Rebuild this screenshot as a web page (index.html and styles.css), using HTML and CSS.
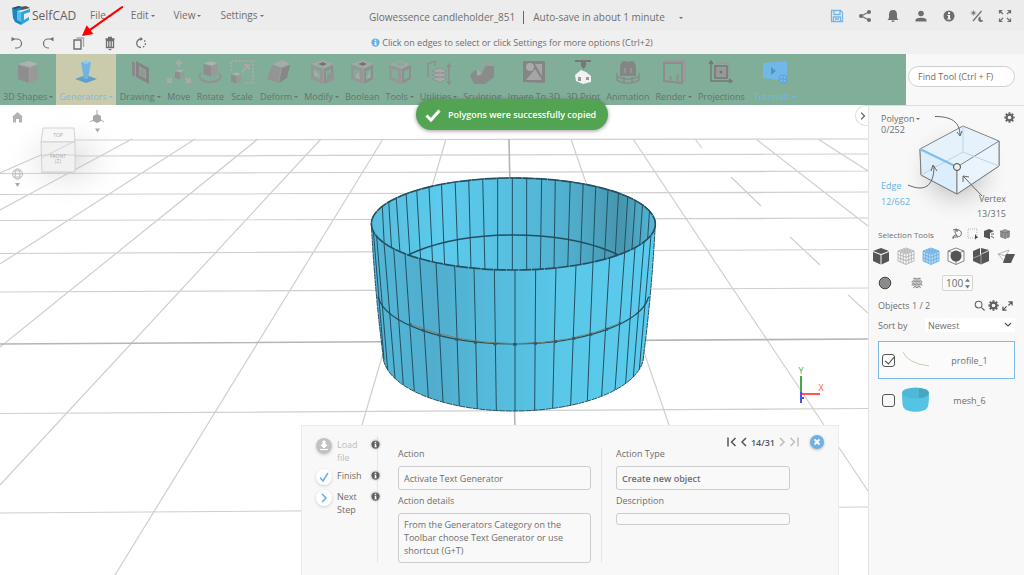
FILE: index.html
```html
<!DOCTYPE html>
<html lang="en">
<head>
<meta charset="utf-8">
<title>SelfCAD</title>
<link rel="stylesheet" href="styles.css">
</head>
<body>
<svg class="defs" aria-hidden="true">
  <symbol id="info" viewBox="0 0 12 12"><circle cx="6" cy="6" r="5.5" fill="currentColor"/><path d="M5 2.3h2v1.6H5zM4.4 5H7v3.6h.8v1H4.3v-1h.9V6h-.8z" fill="#fff"/></symbol>
  <symbol id="gear" viewBox="0 0 12 12"><circle cx="6" cy="6" r="3.1" fill="none" stroke="currentColor" stroke-width="2.2"/><path d="M6 .4v2M6 9.6v2M.4 6h2M9.6 6h2M2 2l1.5 1.5M8.5 8.5 10 10M10 2 8.500 3.500M3.500 8.500 2 10" stroke="currentColor" stroke-width="2.200"/></symbol>
  <symbol id="cube" viewBox="0 0 24 24"><path d="M2 4 13 1l9 3-8 3z" fill="#b0b0b0"/><path d="M2 5l11 3v15L2 19z" fill="#8e8e8e"/><path d="M14 8l8-3v14l-8 4z" fill="#999"/></symbol>
  <symbol id="frame" viewBox="0 0 24 24"><path d="M2 4 13 0l9 4-8 4z" fill="#a8a8a8"/><path d="M8 4l5-2 4 2-4 2z" fill="#747474"/><path fill-rule="evenodd" d="M1 5l12 4v15L1 19zM4 9v8l6 3v-9z" fill="#969696"/><path fill-rule="evenodd" d="M14 9l9-4v14l-9 5zM16 11v9l5-3V9z" fill="#8e8e8e"/></symbol>
  <symbol id="mesh" viewBox="0 0 18 18"><path d="M1 4 9 1l8 3v10l-8 3.500L1 14zM1 4l8 3 8-3M9 7v10M3.700 5v10M6.300 6v10M11.700 6v10M14.300 5v10M1 7.300l8 3 8-3M1 10.700l8 3 8-3M3.700 3l8 3M6.300 2l8 3M14.300 3l-8 3M11.700 2l-8 3" fill="none" stroke="currentColor" stroke-width=".8"/></symbol>
  <symbol id="expand" viewBox="0 0 14 14"><path d="M1.500 4.500v-3h3M9.500 1.500h3v3M12.500 9.500v3h-3M4.500 12.500h-3v-3M1.500 1.500 5 5M12.500 1.500 9 5M12.500 12.500 9 9M1.500 12.500 5 9" fill="none" stroke="currentColor" stroke-width="1.200"/></symbol>
</svg>

<header class="topbar">
  <div class="brand">
    <svg class="brand-mark" viewBox="0 0 20 21"><path d="M1 3 8 1l3 1v3l-5 1v8l4 2v4l-6-3-2-4z" fill="#1688bd"/><path d="M1 3l7-2 2 1-6 2z" fill="#444"/><path d="M6 6l4 1v10l-4-2z" fill="#56bfec"/><path d="M10 7l9-3v3l-6 2v6l5-3v3l-8 5z" fill="#2ba6df"/><path d="M9 2l6-1 4 2-8 2z" fill="#555"/></svg>
    <span class="brand-name">SelfCAD</span>
  </div>
  <nav class="menu">
    <button class="menu-item">File<i class="caret"></i></button>
    <button class="menu-item">Edit<i class="caret"></i></button>
    <button class="menu-item">View<i class="caret"></i></button>
    <button class="menu-item">Settings<i class="caret"></i></button>
  </nav>
  <div class="project">
    <span class="project-name">Glowessence candleholder_851</span>
    <button class="autosave">Auto-save in about 1 minute<i class="caret caret-far"></i></button>
  </div>
  <div class="actions">
    <button class="icon-btn blue" aria-label="Save"><svg viewBox="0 0 14 14"><path d="M1.500 1.500h9l2 2v9h-11zM4 1.500v4h6v-4M3.500 12.500V8h7v4.500M5 10h4" fill="none" stroke="currentColor" stroke-width="1.300"/></svg></button>
    <button class="icon-btn" aria-label="Share"><svg viewBox="0 0 14 14"><path d="M11 3 3 7l8 4" fill="none" stroke="currentColor" stroke-width="1.200"/><g fill="currentColor"><circle cx="11" cy="3" r="2"/><circle cx="3" cy="7" r="2"/><circle cx="11" cy="11" r="2"/></g></svg></button>
    <button class="icon-btn" aria-label="Notifications"><svg viewBox="0 0 14 14"><path d="M7 1c3 0 4 2 4 4.500V9l1.500 2h-11L3 9V5.500C3 3 4 1 7 1zM5.500 11.500h3a1.500 1.500 0 0 1-3 0z" fill="currentColor"/></svg></button>
    <button class="icon-btn" aria-label="Account"><svg viewBox="0 0 14 14"><circle cx="7" cy="4.500" r="2.800" fill="currentColor"/><path d="M1.500 12.500V11c0-3 11-3 11 0v1.500z" fill="currentColor"/></svg></button>
    <button class="icon-btn" aria-label="Information"><svg viewBox="-1 -1 14 14"><use href="#info" width="12" height="12"/></svg></button>
    <button class="icon-btn" aria-label="Theme"><svg viewBox="0 0 14 14"><path d="M11.500 2 3 12" stroke="currentColor" stroke-width="1.200"/><circle cx="3.500" cy="4" r="1.300" fill="currentColor"/><path d="M3.500 1v6M.5 4h6M1.500 2l4 4M5.500 2l-4 4" stroke="currentColor" stroke-width=".5"/><path d="M10.500 7.500a2.800 2.800 0 1 0 3 4c-2 .5-3.600-1.500-3-4z" fill="currentColor"/></svg></button>
    <button class="icon-btn" aria-label="Full screen"><svg viewBox="0 0 14 14"><use href="#expand"/></svg></button>
  </div>
</header>

<div class="editbar">
  <div class="edit-tools">
    <button class="icon-btn" aria-label="Undo"><svg viewBox="0 0 14 14"><path d="M3 3h4a4.500 4.500 0 0 1 0 9H5" fill="none" stroke="currentColor" stroke-width="1.200"/><path d="M1.500 1v4.500L5 3z" fill="currentColor"/></svg></button>
    <button class="icon-btn" aria-label="Redo"><svg viewBox="0 0 14 14"><path d="M11 3H7a4.500 4.500 0 0 0 0 9h1" fill="none" stroke="currentColor" stroke-width="1.200"/><path d="M12.500 1v4.500L9 3z" fill="currentColor"/></svg></button>
    <button class="icon-btn" aria-label="Copy"><svg viewBox="0 0 14 14"><path d="M2 4h7v9H2z" fill="none" stroke="currentColor" stroke-width="1.400"/><path d="M4.500 2h7v9" fill="none" stroke="#a3a9b1" stroke-width="1.300"/></svg></button>
    <button class="icon-btn" aria-label="Delete"><svg viewBox="0 0 14 14"><path d="M2.500 3h9M5 1.500h4M3.500 4.500h7v7h-7zM5.800 5v7M8.200 5v7" fill="none" stroke="currentColor" stroke-width="1.300"/><path d="M5 13h4l-2 1.500z" fill="currentColor"/></svg></button>
    <button class="icon-btn" aria-label="Reset"><svg viewBox="0 0 14 14"><path d="M7 11.500a4.200 4.200 0 1 1 0-8.500" fill="none" stroke="currentColor" stroke-width="1.300"/><path d="M6.500 1v4L9 3z" fill="currentColor"/><path d="M9 11a4.200 4.200 0 0 0 1-7" fill="none" stroke="currentColor" stroke-width="1.400" stroke-dasharray="1.500 1.500"/></svg></button>
  </div>
  <p class="hint"><svg class="hint-icon"><use href="#info"/></svg>Click on edges to select or click Settings for more options (Ctrl+2)</p>
</div>

<div class="ribbon">
  <div class="tools">
    <button class="tool"><svg viewBox="0 0 24 24"><use href="#cube"/></svg><span>3D Shapes<i class="caret"></i></span></button>
    <button class="tool tool-active"><svg viewBox="0 0 24 24"><path d="M12 15l11 4-11 4-11-4z" fill="#5d9fce"/><path d="M7 2h10l-3 17h-4z" fill="#70b4e3"/><path d="M7 2l5-2 5 2-5 2z" fill="#94c9ed"/></svg><span>Generators<i class="caret"></i></span></button>
    <button class="tool"><svg viewBox="0 0 24 24"><path d="M4 1v14l3 2V3z" fill="#8a8a8a"/><path fill-rule="evenodd" d="M8 1l13 7v16L8 17zM11 6v9l7 4v-9z" fill="#858585"/><path d="M12 8v7l5 3v-7z" fill="#8f9a93"/></svg><span>Drawing<i class="caret"></i></span></button>
    <button class="tool"><svg viewBox="0 0 24 24"><use href="#cube" x="7" y="9" width="11" height="11"/><path d="M12 1v6M9 4l3-3 3 3M5 18l-4 4M1 18v4h4M19 18l4 4M19 22h4v-4" fill="none" stroke="#aaa" stroke-width="2"/></svg><span>Move</span></button>
    <button class="tool"><svg viewBox="0 0 24 24"><use href="#cube" x="4" y="0" width="17" height="18"/><path d="M3 13c-5 5 2 9 9 9s14-4 9-9" fill="none" stroke="#939393" stroke-width="2"/></svg><span>Rotate</span></button>
    <button class="tool"><svg viewBox="0 0 24 24"><path d="M1 11V1h22v22H14" fill="none" stroke="#a8a8a8" stroke-width="2" stroke-dasharray="2 1.500"/><use href="#cube" x="0" y="12" width="12" height="12"/><path d="M12 12l7-7M14 5h5v5" fill="none" stroke="#a8a8a8" stroke-width="2"/></svg><span>Scale</span></button>
    <button class="tool"><svg viewBox="0 0 24 24"><path d="M6 4l10-4 7 4-9 3z" fill="#aaa"/><path d="M5 5l9 3-3 15L0 19z" fill="#949494"/><path d="M15 8l8-3-3 13-8 5z" fill="#878787"/></svg><span>Deform<i class="caret"></i></span></button>
    <button class="tool"><svg viewBox="0 0 24 24"><use href="#frame"/><path d="M4 9l6 8-6-1z" fill="#aaa"/><path d="M17 14l7-3v9l-7 3z" fill="#949494"/></svg><span>Modify<i class="caret"></i></span></button>
    <button class="tool"><svg viewBox="0 0 24 24"><use href="#frame"/><path d="M5 18l3-7 2 8zM17 19l2-8 2 6z" fill="#aaa"/></svg><span>Boolean</span></button>
    <button class="tool"><svg viewBox="0 0 24 24"><use href="#frame"/><path d="M5 3l8-3 6 3-6 3z" fill="#8cac9a"/></svg><span>Tools<i class="caret"></i></span></button>
    <button class="tool"><svg viewBox="0 0 24 24"><path d="M1 17V4l7-3v5M22 5v18M20 7l2-3 2 3M20 21l2 3 2-3" fill="none" stroke="#8c8c8c" stroke-width="1.300"/><path d="M5 11l8-3 7 3-7 3zM5 15l8-3 7 3-7 3zM5 19l8-3 7 3-7 3z" fill="#aaa" stroke="#858585" stroke-width=".5"/></svg><span>Utilities<i class="caret"></i></span></button>
    <button class="tool"><svg viewBox="0 0 24 24"><path d="M0 15l5-5 6 4 5-8h8v11l-9 7H4z" fill="#8b8b8b"/><path d="M18 0 9 10" stroke="#a0a0a0" stroke-width="1.500"/><path d="M7 9l5 5-5 2z" fill="#aaa"/></svg><span>Sculpting</span></button>
    <button class="tool"><svg viewBox="0 0 24 24"><path d="M1 1h22v22L1 22z" fill="#858585"/><circle cx="8" cy="7" r="4" fill="#aaa"/><path d="M4 20l9-11 7 11zM13 4h7v12z" fill="#a5a5a5"/></svg><span>Image To 3D</span></button>
    <button class="tool"><svg viewBox="0 0 24 24"><path d="M4 0h16v2H4zM10 2h5v4l-2.500 3L10 6z" fill="#777"/><path d="M4 15l6-5 5 2 5 4v6l-8 2-7-3z" fill="#f1f1f1"/><path d="M7 17h3v4H7zM15 17h3v3h-3z" fill="#999"/></svg><span>3D Print</span></button>
    <button class="tool"><svg viewBox="0 0 24 24"><path d="M4 8c0-8 5-8 8-6 3-2 8-2 8 6v8H4z" fill="#858585"/><path d="M9 13V8M15 13V8" stroke="#999" stroke-width="1.500"/><path d="M1 13v7c5 4 17 4 22 0v-7M1 16c5 4 17 4 22 0M8 17v6M16 17v6" fill="none" stroke="#8a8a8a" stroke-width="1.600"/></svg><span>Animation</span></button>
    <button class="tool"><svg viewBox="0 0 24 24"><path d="M3 3V1h20v20l-3 1" fill="none" stroke="#999" stroke-width="2"/><path d="M2 3h18v20l-18-2z" fill="none" stroke="#8d8d8d" stroke-width="2"/><path d="M7 21v-5h3v5zM14 22v-8h3v8z" fill="#8a9a91"/></svg><span>Render<i class="caret"></i></span></button>
    <button class="tool"><svg viewBox="0 0 24 24"><path d="M2 1v20h21M0 4l2-3 2 3M20 19l3 2-3 2" fill="none" stroke="#777" stroke-width="1.400"/><path d="M6 6l3-3h11v11l-2 4" fill="none" stroke="#999" stroke-width="1.500"/><path d="M6 6h12v12H6z" fill="#999" stroke="#777" stroke-width="1.500"/><circle cx="12" cy="12" r="1.500" fill="#5f7f6f"/></svg><span>Projections</span></button>
    <button class="tool tool-link"><svg viewBox="0 0 24 24"><path d="M0 3l24-2v20L0 18z" fill="#70b8ea"/><path d="M8 7l5 4-5 4z" fill="#5a92ae"/><circle cx="20" cy="19" r="4" fill="#78bcea" stroke="#5d9fce"/><path d="M20 16v6M17 19h6" stroke="#5d9fce"/></svg><span>Tutorials<i class="caret"></i></span></button>
  </div>
  <input class="find" type="text" aria-label="Find tool" placeholder="Find Tool (Ctrl + F)">
</div>

<main class="workspace">
  <section class="viewport" aria-label="3D view">
    <svg class="scene" viewBox="0 105 868 470" preserveAspectRatio="xMinYMin slice">
      <defs>
        <linearGradient id="outer"><stop offset="0" stop-color="#53b7d8"/><stop offset=".22" stop-color="#50adcd"/><stop offset=".4" stop-color="#54b9da"/><stop offset=".68" stop-color="#59c8e9"/><stop offset="1" stop-color="#5bcbed"/></linearGradient>
        <linearGradient id="inner"><stop offset="0" stop-color="#56bddd"/><stop offset=".25" stop-color="#5ccbed"/><stop offset=".45" stop-color="#58c2e3"/><stop offset=".7" stop-color="#50aecd"/><stop offset=".88" stop-color="#4795ae"/><stop offset="1" stop-color="#56b9d8"/></linearGradient>
        <radialGradient id="haze"><stop offset="0" stop-color="#999" stop-opacity=".55"/><stop offset="1" stop-color="#fff" stop-opacity="0"/></radialGradient>
        <clipPath id="mouth"><ellipse cx="490" cy="192" rx="426" ry="138"/></clipPath>
      </defs>
      <path fill="none" stroke="#cfcfcf" stroke-width="1.200" d="M75 140 868 139M75 156 868 154M0 173.500 868 171M0 194.500 868 192M0 220.500 868 218M0 253.500 868 249.500M0 292 868 288M0 413.500 868 408.500M0 513 868 507M446 139 362 425M383 139 115 575M321 139 0 485M258 139 0 347M195 139 0 264M132 139 0 210M75 140 0 173M571 139 669 425M633 139 868 491M695 139 702 148M731 177 761 206M790 237 820 265M848 295 868 313M756 139 868 226M818 139 868 171"/>
      <path fill="none" stroke="#b5b5b5" stroke-width="1.600" d="M0 344 868 339M509 139 515 430"/>
      <svg x="350" y="160" width="320" height="260" viewBox="0 0 960 780">
        <path d="M64 192A426 138 0 0 1 916 192Q905 400 881 585A391 168 0 0 1 99 585Q75 400 64 192z" fill="url(#outer)" stroke="#244f61" stroke-width="3" stroke-dasharray="18 2"/>
        <ellipse cx="490" cy="192" rx="426" ry="138" fill="url(#inner)"/>
        <g clip-path="url(#mouth)" fill="none" stroke="#244f61" stroke-width="3">
          <path d="M95 100 103 260M114 90 125 270M137 90 150 280M167 80 180 290M199 70 212 300M236 60 248 310M274 60 284 320M315 50 325 330M356 50 363 330M398 50 405 335M443 50 443 335M487 50 487 335M530 50 530 335M575 50 571 335M616 50 612 330M661 50 653 330M700 60 691 320M738 60 728 320M775 70 763 310M807 70 795 300M835 80 822 290M858 90 845 280M880 100 868 270M900 130 892 250"/>
          <ellipse cx="490" cy="389" rx="408" ry="164" stroke-width="5"/>
        </g>
        <path fill="none" stroke="#244f61" stroke-width="3" d="M70 212 102 600M80 230 113 630M102 249 135 655M131 266 160 675M165 281 193 694M209 296 235 712M258 308 279 726M314 318 328 738M372 325 382 746M433 329 439 752M495 330 495 753M557 328 554 751M618 324 608 745M678 316 662 736M729 306 712 723M779 293 755 708M824 278 795 690M855 263 827 670M882 246 850 650M903 226 868 628"/>
        <ellipse cx="490" cy="192" rx="426" ry="138" fill="none" stroke="#244f61" stroke-width="5" stroke-dasharray="36 2"/>
        <path d="M84 410A408 157 0 0 0 896 410" fill="none" stroke="#244f61" stroke-width="4"/>
        <path d="M180 492Q320 549 490 551T810 490" fill="none" stroke="#7d8168" stroke-width="3"/>
        <path d="M178 494h6M216 511h8M263 525h9M316 538h9M372 547h9M430 552h10M489 553h11M551 550h10M612 545h9M667 535h9M718 523h9M766 508h8M806 491h6" stroke="#315970" stroke-width="8"/>
      </svg>
      <ellipse cx="66" cy="160" rx="66" ry="50" fill="url(#haze)" opacity=".6"/>
      <g stroke="#c4c4c4" stroke-width=".7"><path d="M43 128h31l1 14H41z" fill="#f7f7f7"/><path d="M41 142h34v30H42z" fill="#f1f1f1"/></g>
      <path d="M41 158l34-17M41 155h34M41 173h34" stroke="#ccc" stroke-width=".8"/>
      <g class="cube-text"><text x="58" y="137">TOP</text><text x="58" y="158">FRONT</text><text x="58" y="163">(Z)</text></g>
      <path d="M12 117l5.500-5 5.500 5h-1v5.500h-3v-3.500h-3v3.500h-3V117z" fill="#b2b2b2"/>
      <path d="M93 116l4-2 4 2v5l-4 2-4-2z" fill="#a8a8a8"/><path d="M97 110v4M93 120l-3 2M101 120l3 2" stroke="#aaa"/>
      <path d="M95 128.500h5l-2.500 4zM15 183h5l-2.500 4z" fill="#aaa"/>
      <g fill="none" stroke="#c0c0c0"><circle cx="17.500" cy="174" r="5"/><ellipse cx="17.500" cy="174" rx="2.300" ry="5"/><path d="M12.500 174h10M13.500 171h8M13.500 177h8"/></g>
      <path d="M801 376v18" stroke="#48a648" stroke-width="2"/><path d="M801 394h19" stroke="#f55" stroke-width="2"/><path d="M801 392v11M802 398h2" stroke="#5050ee" stroke-width="2"/>
      <g class="axis"><text x="801" y="374" fill="#55a955">Y</text><text x="821" y="391" fill="#ff6060">X</text></g>
    </svg>
    <button class="collapse" aria-label="Collapse panel"><svg viewBox="0 0 8 12"><path d="M1.500 1.500 6 6l-4.500 4.500" fill="none" stroke="#555" stroke-width="1.500"/></svg></button>

    <section class="tutorial" aria-label="Tutorial step">
      <div class="steps">
        <button class="step step-off"><svg class="step-icon" viewBox="0 0 16 16"><circle cx="8" cy="8" r="8" fill="#c2c2c2"/><path d="M7 3h2v4h2l-3 3-3-3h2zM4 11.500h8" fill="#fff" stroke="#fff"/></svg><span>Load file</span><svg class="step-info"><use href="#info"/></svg></button>
        <button class="step"><svg class="step-icon ring" viewBox="0 0 16 16"><path d="M4 8.500 7 12l5-8" fill="none" stroke="#61aee4" stroke-width="1.500"/></svg><span>Finish</span><svg class="step-info"><use href="#info"/></svg></button>
        <button class="step"><svg class="step-icon ring" viewBox="0 0 16 16"><path d="M6 4l4 4-4 4" fill="none" stroke="#61aee4" stroke-width="1.500"/></svg><span>Next Step</span><svg class="step-info"><use href="#info"/></svg></button>
      </div>
      <div class="fields fields-action">
        <label for="action">Action</label>
        <input id="action" type="text" value="Activate Text Generator">
        <label for="details">Action details</label>
        <textarea id="details">From the Generators Category on the Toolbar choose Text Generator or use shortcut (G+T)</textarea>
      </div>
      <div class="side">
        <div class="pager">
          <button class="page-btn" aria-label="First"><svg viewBox="0 0 10 10"><path d="M1 .5v9M8.500 1 4.500 5l4 4" fill="none" stroke="currentColor" stroke-width="1.500"/></svg></button>
          <button class="page-btn" aria-label="Previous"><svg viewBox="0 0 10 10"><path d="M7 1 3 5l4 4" fill="none" stroke="currentColor" stroke-width="1.500"/></svg></button>
          <span>14/31</span>
          <button class="page-btn faint" aria-label="Next"><svg viewBox="0 0 10 10"><path d="M3 1l4 4-4 4" fill="none" stroke="currentColor" stroke-width="1.500"/></svg></button>
          <button class="page-btn faint" aria-label="Last"><svg viewBox="0 0 10 10"><path d="M9 .5v9M1.500 1l4 4-4 4" fill="none" stroke="currentColor" stroke-width="1.500"/></svg></button>
          <button class="close" aria-label="Close"><svg viewBox="0 0 14 14"><path d="M4.500 4.500l5 5M9.500 4.500l-5 5" stroke="#fff" stroke-width="1.800"/></svg></button>
        </div>
        <div class="fields fields-type">
          <label for="type">Action Type</label>
          <input id="type" class="strong" type="text" value="Create new object">
          <label for="description">Description</label>
          <input id="description" class="thin" type="text">
        </div>
      </div>
    </section>
  </section>

  <aside class="sidebar">
    <div class="picker">
      <svg class="picker-art" viewBox="1 0 156 120">
        <defs><radialGradient id="shade"><stop offset="0" stop-color="#777" stop-opacity=".75"/><stop offset="1" stop-color="#f8f8f8" stop-opacity="0"/></radialGradient></defs>
        <ellipse cx="88" cy="66" rx="54" ry="52" fill="url(#shade)"/>
        <g stroke="#757575" stroke-width=".9" stroke-linejoin="round"><path d="M52 44 95 21l36 15v25L89 89 53 70z" fill="#e5f2fc"/><path d="M52 44l37 18v27L53 70z" fill="#dcedfb"/><path d="M89 62l42-26v25L89 89z" fill="#e9f4fd"/></g>
        <path d="M95 21v26M53 70l42-23 36 14" fill="none" stroke="#bccfdd" stroke-width=".9"/>
        <path d="M52 44l37 18" stroke="#83bde9" stroke-width="2"/><circle cx="89" cy="62" r="3.500" fill="#eee" stroke="#444"/>
        <path d="M67 11.500c16 0 25 5 25 19M89 27l3 4 2-5M40 80c16 7 26 2 26-19M63 66l2-6 4 6M114 91 95 71M95 77v-6l6 1" fill="none" stroke="#666"/>
      </svg>
      <button class="mode mode-polygon">Polygon<i class="caret"></i><br>0/252</button>
      <button class="mode mode-edge">Edge<br>12/662</button>
      <button class="mode mode-vertex">Vertex<br>13/315</button>
      <button class="picker-settings" aria-label="Selection settings"><svg><use href="#gear"/></svg></button>
    </div>
    <div class="row selection-head">
      <h2>Selection Tools</h2>
      <div class="mini-tools">
        <button aria-label="Lasso"><svg viewBox="0 0 12 12"><path d="M3 10c-2-1 0-3 2-3s-1-1-1-3 1-2 3-2c3 0 4 3 3 5s-3 2-5 0M2 2l4-1v3M7 9H2v2" fill="none" stroke="#666"/></svg></button>
        <button aria-label="Rectangle"><svg viewBox="0 0 12 12"><path d="M1 1h9v9H1z" fill="none" stroke="#999" stroke-width=".7" stroke-dasharray="1 1"/><path d="M8 6l3 4H9l-1 2z" fill="#444"/></svg></button>
        <button aria-label="Grow"><svg viewBox="0 0 12 12"><path d="M1 3l5-2 5 2-4 2v6L1 9z" fill="#555"/><path d="M8 6h3M8 8l3 2" stroke="#666"/></svg></button>
        <button aria-label="Loop"><svg viewBox="0 0 12 12"><path d="M1 3l5-2 5 2v6l-5 2-5-2z" fill="#999"/><path d="M3 4v6M6 5v6M9 4v6M1 3l5 2 5-2" fill="none" stroke="#666" stroke-width=".6"/></svg></button>
      </div>
    </div>
    <div class="row view-tools">
      <button aria-label="Solid"><svg viewBox="0 0 18 18"><path d="M1 4l8-3 8 3-8 3zM1 5l7.500 3v9.500L1 14zM9.500 8 17 5v9l-7.500 3.500z" fill="#555"/></svg></button>
      <button class="grey" aria-label="Wireframe"><svg><use href="#mesh"/></svg></button>
      <button class="blue" aria-label="Solid and wireframe"><svg viewBox="0 0 18 18"><path d="M1 4 9 1l8 3v10l-8 3.500L1 14z" fill="#b4daf5"/><use href="#mesh" width="18" height="18"/></svg></button>
      <button aria-label="Isolate"><svg viewBox="0 0 18 18"><path d="M1 4l8-3 8 3v10l-8 3.500L1 14zM1 4l8 3 8-3M9 7v10" fill="none" stroke="#888"/><circle cx="9" cy="9" r="5.500" fill="#555"/></svg></button>
      <button aria-label="Section"><svg viewBox="0 0 18 18"><path d="M1 4l7-3v7l9-4v10l-8 3.500L1 14zM9 1l8 2-8 4z" fill="#555"/><path d="M1 11l8-3v9" fill="none" stroke="#bbb" stroke-width=".7"/></svg></button>
      <button aria-label="Unfold"><svg viewBox="0 0 18 18"><path d="M8 15 1 7l11-4" fill="none" stroke="#aaa" stroke-width=".8"/><path d="M1 7l8 2 3-6" fill="none" stroke="#aaa" stroke-width=".8"/><path d="M9 7h9l-4 9H6z" fill="#555"/></svg></button>
    </div>
    <div class="row surface">
      <button aria-label="Smooth"><svg viewBox="0 0 14 14"><circle cx="7" cy="7" r="5.800" fill="#8b8b8b" stroke="#444"/></svg></button>
      <button aria-label="Textured"><svg viewBox="0 0 14 14"><path d="M3 3l2-1 2 1 2-1 2 1M1.500 6l2-1.500L5.500 6 7 4.500 8.500 6l2-1.500 2 1.500M1.500 9l2-1.500L5.500 9 7 7.500 8.500 9l2-1.500 2 1.500M3 12l2-1.500L7 12l2-1.500 2 1.500M5 2v9M9 2v9M7 3v9M3 5v5M11 5v5" fill="none" stroke="#777" stroke-width=".8"/></svg></button>
      <div class="stepper"><input type="text" aria-label="Opacity" value="100"><svg viewBox="0 0 6 12"><path d="M3 0l3 4H0zM3 12l3-4H0z" fill="#777"/></svg></div>
    </div>
    <div class="row objects-head">
      <h2>Objects 1 / 2</h2>
      <div class="mini-tools">
        <button aria-label="Search"><svg viewBox="0 0 12 12"><circle cx="5" cy="5" r="3.700" fill="none" stroke="#666" stroke-width="1.200"/><path d="M8 8l3.500 3.500" stroke="#666" stroke-width="1.400"/></svg></button>
        <button aria-label="Object settings"><svg><use href="#gear"/></svg></button>
        <button aria-label="Expand"><svg viewBox="0 0 12 12"><path d="M7 2h4v4M11 2 7 6M1 7v4h4M1 11l4-4" fill="none" stroke="#555" stroke-width="1.300"/></svg></button>
      </div>
    </div>
    <div class="row sort">
      <label for="sort">Sort by</label>
      <div class="select"><select id="sort"><option>Newest</option></select><svg viewBox="0 0 8 6"><path d="M1 1l3 3 3-3" fill="none" stroke="#555" stroke-width="1.200"/></svg></div>
    </div>
    <ul class="objects">
      <li class="object object-on"><input id="profile" type="checkbox" checked><label for="profile"><svg viewBox="0 0 30 26"><path d="M2 5q4 11 26 14" fill="none" stroke="#c6c6ab" stroke-width=".9"/></svg><span>profile_1</span></label></li>
      <li class="object"><input id="mesh6" type="checkbox"><label for="mesh6"><svg viewBox="0 0 30 26"><path d="M1 6q0 14 2 15c3 5 20 5 23 0q2-1 2-15z" fill="#55c4e4"/><ellipse cx="14.500" cy="6" rx="13.500" ry="5.500" fill="#50b7d5"/><path d="M18 11V1c7 1 12 4 9 7-2 2-5 3-9 3z" fill="#49a5c0"/></svg><span>mesh_6</span></label></li>
    </ul>
  </aside>
</main>

<div class="toast" role="status"><svg viewBox="0 0 16 14"><path d="M1.500 7.500 6 12l8.500-9.500" fill="none" stroke="#fff" stroke-width="3"/></svg>Polygons were successfully copied</div>
<svg class="pointer" viewBox="0 0 48 34" aria-hidden="true"><path d="M44 2 10 26" stroke="#f00" stroke-width="2.200" stroke-linecap="round"/><path d="M2 32l5-11 7 9z" fill="#f00"/></svg>
</body>
</html>
```
FILE: styles.css
```css
* { box-sizing: border-box; }
body { margin: 0; min-height: 100vh; display: flex; flex-direction: column; overflow: hidden; background: #fff; color: #6e6e6e; font: 10px/13px "Open Sans", "Noto Sans", sans-serif; position: relative; }
button { margin: 0; padding: 0; border: 0; background: none; color: inherit; font: inherit; }
input, textarea, select { margin: 0; font: inherit; color: inherit; }
h2, p, ul { margin: 0; padding: 0; font: inherit; list-style: none; }
svg { display: block; flex: none; overflow: visible; }
.defs { position: absolute; width: 0; height: 0; }
.caret { display: inline-block; margin-left: 2px; border: 2px solid transparent; border-top-color: currentColor; border-bottom: 0; vertical-align: 2px; }
.caret-far { margin-left: 14px; }
.blue { color: #74b6e8; }
.icon-btn svg { width: 14px; height: 14px; }

.topbar { display: flex; align-items: center; height: 31px; background: #ececec; }
.brand { display: flex; align-items: center; gap: 1px; width: 90px; padding-left: 11px; }
.brand-mark { width: 20px; height: 21px; }
.brand-name { font-size: 12px; color: #606060; }
.menu { display: flex; gap: 19px; width: 278px; padding-bottom: 1px; }
.menu-item { white-space: nowrap; }
.project { display: flex; align-items: center; padding-top: 4px; white-space: nowrap; }
.project-name { padding: 0 8px 0 1px; border-right: 1px solid #666; }
.autosave { padding-left: 9px; }
.actions { display: flex; gap: 14px; margin-left: auto; padding: 1px 12px 0 0; }

.editbar { display: grid; grid-template-columns: 1fr auto 1fr; align-items: center; height: 23px; background: #f0f0f0; }
.edit-tools { display: flex; gap: 17px; padding-left: 10px; }
.hint { display: flex; align-items: center; gap: 2px; height: 20px; font-size: 9px; }
.hint-icon { width: 9px; height: 9px; color: #6cb1e4; }

.ribbon { display: flex; align-items: center; height: 51px; background: #f8f8f8; }
.tools { display: flex; flex: 1; gap: 1px; height: 51px; background: #80ae99; font-size: 9px; color: #66756c; }
.tool { display: flex; flex-direction: column; align-items: center; gap: 6px; padding: 6px 2px 0 3px; white-space: nowrap; }
.tool svg { width: 24px; height: 24px; }
.tool-active { padding-right: 3px; background: #c9cbac; color: #7bbbe5; }
.tool-link { margin-left: 3px; color: #70b8ea; }
.find { width: 107px; height: 21px; margin: 0 9px 6px 2px; padding: 0 9px; border: 1px solid #cfcfcf; border-radius: 11px; background: #fff; font-size: 9px; }
.find::placeholder { color: #6e6e6e; opacity: 1; }

.workspace { display: flex; flex: 1; min-height: 470px; }
.viewport { position: relative; flex: 1; overflow: hidden; }
.scene { position: absolute; inset: 0; width: 100%; height: 100%; }
.cube-text { font-size: 5px; fill: #aaa; text-anchor: middle; }
.axis { font-size: 9px; text-anchor: middle; }
.collapse { position: absolute; top: 0; right: 0; width: 13px; height: 21px; padding-left: 4px; border: 1px solid #ddd; border-right: 0; border-radius: 11px 0 0 11px; background: #fff; }
.collapse svg { width: 6px; height: 10px; }

.tutorial { position: absolute; right: 29px; bottom: 0; width: 538px; height: 150px; display: flex; padding-top: 10px; background: #f8f8f8; border: 1px solid #ececec; border-bottom: 0; font-size: 9px; }
.steps { display: flex; flex-direction: column; gap: 5px; width: 76px; height: 127px; padding: 2px 2px 0 14px; border-right: 1px solid #e6e6e6; }
.step { display: flex; align-items: flex-start; gap: 5px; text-align: left; }
.step span { flex: none; width: 26px; }
.step-off { color: #bcbcbc; }
.step-icon { width: 16px; height: 16px; border-radius: 8px; box-shadow: 0 1px 3px #ccc; }
.ring { background: #fff; }
.step-info { width: 9px; height: 9px; margin: 2px 0 0 3px; color: #606060; border-radius: 5px; box-shadow: 0 0 2px #aaa; }
.fields { display: flex; flex-direction: column; }
.fields label { height: 12px; line-height: 12px; margin-bottom: 6px; }
.fields input, .fields textarea { display: block; width: 100%; padding: 4px 5px; border: 1px solid #cdcdcd; border-radius: 3px; background: #f9f9f9; resize: none; overflow: hidden; }
.fields input { height: 24px; margin-bottom: 5px; }
.fields textarea { height: 50px; }
.fields .strong { font-weight: 600; }
.fields .thin { height: 12px; }
.fields-action { width: 213px; margin-right: 10px; padding: 12px 0 0 20px; }
.side { flex: 1; }
.pager { display: flex; align-items: center; justify-content: flex-end; gap: 2px; height: 12px; padding-right: 14px; color: #555; font-weight: 600; }
.page-btn svg { width: 10px; height: 10px; }
.faint { color: #bdbdbd; }
.close { margin-left: 9px; border-radius: 7px; background: #6eb2e2; box-shadow: 0 1px 3px #bbb; }
.close svg { width: 14px; height: 14px; }
.fields-type { width: 189px; height: 115px; padding-left: 14px; border-left: 1px solid #e6e6e6; }

.sidebar { width: 156px; background: #f8f8f8; border-left: 1px solid #e3e3e3; box-shadow: inset 0 1px #dcdcdc; }
.picker { position: relative; height: 119px; font-size: 9px; }
.picker-art { width: 156px; height: 120px; }
.mode { position: absolute; text-align: left; line-height: 11px; white-space: nowrap; }
.mode-polygon { left: 12px; top: 8px; }
.mode-edge { left: 12px; top: 73px; line-height: 16px; color: #6cb1e4; }
.mode-vertex { right: 18px; top: 86px; line-height: 15px; text-align: right; }
.picker-settings { position: absolute; right: 9px; top: 7px; color: #666; }
.picker-settings svg { width: 11px; height: 11px; }
.row { display: flex; align-items: center; padding: 0 9px; }
.row button { color: #606060; }
.row .grey { color: #aaa; }
.row .blue { color: #62abdf; }
.mini-tools { display: flex; gap: 4px; margin-left: auto; }
.mini-tools svg { width: 12px; height: 12px; }
.selection-head { height: 20px; padding-right: 13px; font-size: 8px; }
.view-tools { height: 23px; justify-content: space-between; padding: 0 9px 0 3px; }
.view-tools svg { width: 18px; height: 18px; }
.surface { height: 32px; gap: 18px; }
.surface svg { width: 14px; height: 14px; }
.stepper { display: flex; align-items: center; width: 31px; height: 16px; padding: 0 3px; border: 1px solid #d5d5d5; border-radius: 2px; background: #fafafa; }
.stepper input { width: 19px; padding: 0; border: 0; background: none; font-size: 10px; }
.stepper svg { width: 5px; height: 11px; }
.objects-head { height: 12px; padding-right: 11px; font-size: 9px; }
.objects-head .mini-tools { gap: 3px; }
.objects-head .mini-tools svg { width: 11px; height: 11px; }
.sort { height: 28px; font-size: 9px; }
.select { position: relative; width: 90px; margin-left: auto; background: #fff; }
.select select { display: block; width: 100%; height: 14px; padding: 0 3px; border: 0; background: none; appearance: none; }
.select svg { position: absolute; right: 3px; top: 4px; width: 8px; height: 6px; }
.objects { padding: 2px 9px 0; font-size: 9px; }
.object { display: flex; align-items: center; height: 38px; padding: 0 6px 0 3px; border: 1px solid transparent; }
.object + .object { height: 42px; }
.object-on { border-color: #7bb9e6; background: #fbfbfb; }
.object input { appearance: none; width: 13px; height: 13px; border: 1px solid #555; border-radius: 3px; }
.object input:checked::after { content: ""; display: block; width: 4px; height: 8px; margin: 0 0 0 4px; border: solid #444; border-width: 0 1px 1px 0; transform: rotate(40deg); }
.object label { display: flex; flex: 1; align-items: center; padding-left: 6px; }
.object label svg { width: 30px; height: 26px; }
.object label span { flex: 1; text-align: center; }

.toast { position: absolute; left: 50%; top: 99px; display: flex; align-items: center; gap: 7px; width: 192px; height: 31px; margin-left: -96px; padding-left: 9px; border-radius: 16px; background: #52a352; color: #fff; font-size: 9px; font-weight: 600; white-space: nowrap; box-shadow: 0 1px 4px #0006; }
.toast svg { width: 16px; height: 14px; }
.pointer { position: absolute; left: 80px; top: 5px; width: 46px; height: 33px; }
```
